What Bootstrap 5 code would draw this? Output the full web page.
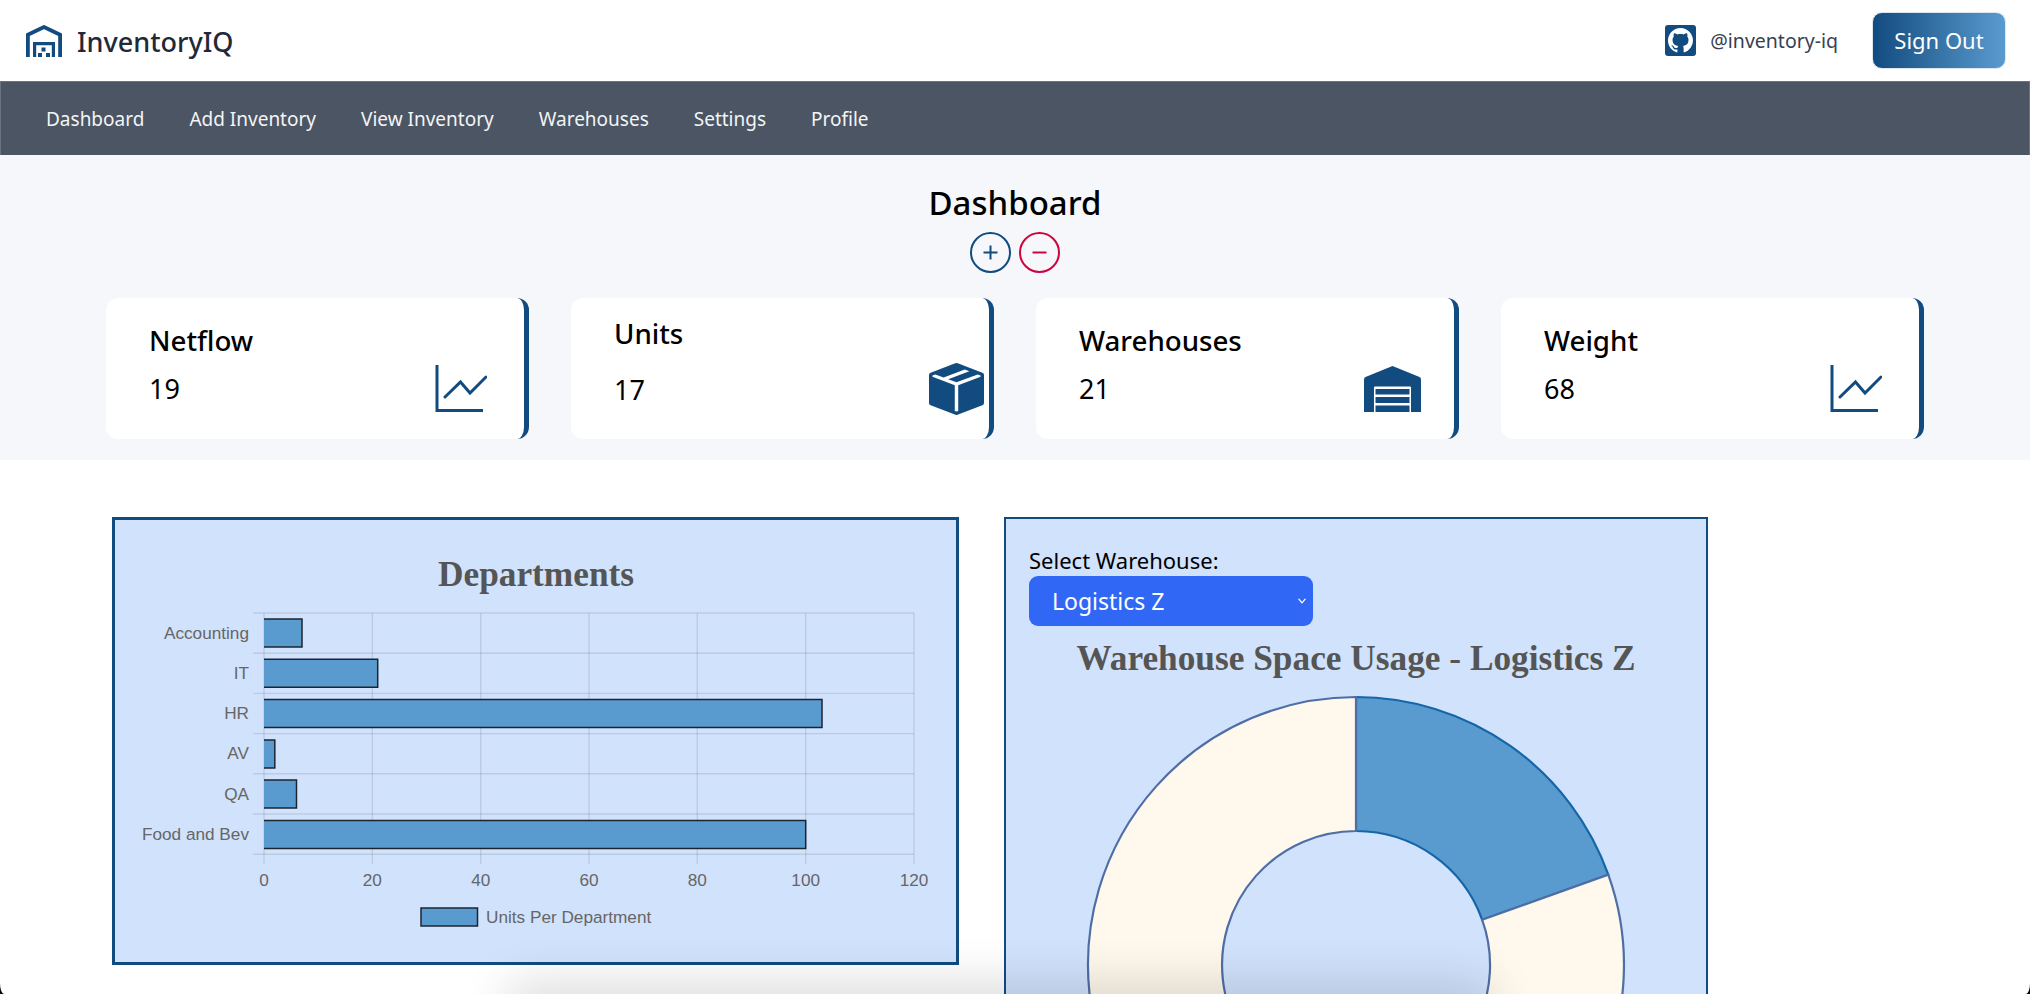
<!DOCTYPE html>
<html lang="en">
<head>
<meta charset="utf-8">
<title>InventoryIQ</title>
<link rel="stylesheet" href="https://cdn.jsdelivr.net/npm/bootstrap@5.3.0/dist/css/bootstrap.min.css">
<style>
html,body{height:994px;overflow:hidden;background:#fff}
body{font-family:"Noto Sans","Open Sans",sans-serif;color:#000}
.top-bar{height:81px;padding:0 24px 0 26px}
.brand-logo{width:36px;height:32px;display:block}
.brand-name{font-size:27px;font-weight:500;color:#1f2937;margin-left:15px;line-height:1;position:relative;top:1px}
.gh-icon{width:31px;height:31px;background:#124b7f;border-radius:3px}
.gh-name{font-size:19.500px;color:#374151;margin:0 34px 0 14px}
.signout-btn{width:134px;height:57px;border-radius:10px;border:1px solid #dbe6f1;color:#fff;font-size:22px;padding:0;background:linear-gradient(90deg,#124b7f,#5a9bcf)}
.signout-btn:hover{color:#fff}
.main-nav{height:74px;background:#4b5563;padding:2px 0 0 45px;border:1px solid #6b7280;border-width:1px 1px 0}
.main-nav.navbar-expand .navbar-nav .nav-link{color:#f3f4f6;font-size:19px;padding:0;margin-right:45px}
.summary-band{height:305px;background:#f5f7fb;padding:0 106px}
.page-title{font-size:33px;font-weight:500;line-height:1;margin:0;padding-top:31px}
.round-btns{gap:8px;margin-top:13px;height:41px}
.round-btn{width:41px;height:41px;padding:0;border:0;background:none;display:block}
.round-btn svg{display:block}
.stat-tiles{margin-top:25px}
.stat-tile{width:423px;height:141px;background:#fff;border-right:5.500px solid #124b7f;border-radius:12px;padding:0 30px 0 43px;position:relative}
.tile-name{font-size:27.700px;font-weight:500;line-height:1;margin:0;position:relative;top:29px}
.tile-value{font-size:27px;line-height:1;margin:0;position:relative;top:49px}
.tile-name.lifted{top:22px}
.tile-value.lifted{top:50px}
.tile-icon{position:absolute;display:block}
.icon-chart{left:329px;top:67px}
.icon-box{left:358px;top:65px}
.icon-shed{left:328px;top:68px}
.chart-area{padding:57px 0 0 112px;gap:45px}
.dept-panel{width:847px;height:448px;background:#d1e2fc;border:3px solid #124b7f;flex:none}
.dept-panel svg,.ware-panel svg{display:block}
.ware-panel{width:704px;height:760px;background:#d1e2fc;border:2px solid #124b7f;flex:none;padding:27px 0 0 23px}
.ware-label{font-size:22px;line-height:28px;display:block;margin:0 0 2px}
.ware-select{width:284px;height:50px;background-color:#3068f5;color:#fff;border:0;border-radius:9px;font-size:23px;padding:0 30px 0 23px;background-image:url("data:image/svg+xml,%3csvg xmlns='http://www.w3.org/2000/svg' viewBox='0 0 16 16'%3e%3cpath fill='none' stroke='%23fff' stroke-linecap='round' stroke-linejoin='round' stroke-width='2' d='m3 5 5 6 5-6'/%3e%3c/svg%3e");background-size:10px 10px;background-position:right 6px center}
.ware-chart{margin:4px 0 0 -23px}
.ct{font-family:"Liberation Sans",Arial,sans-serif;font-size:17.200px;fill:#666}
.cth{font-family:"Liberation Serif","Times New Roman",serif;font-weight:700;font-size:35.300px;fill:#555}
.dock-shade{position:fixed;left:520px;width:960px;bottom:-40px;height:40px;background:#000;box-shadow:0 0 50px 12px rgba(0,0,0,.3);opacity:.45;pointer-events:none}
.win-corners{position:fixed;left:0;right:0;top:0;bottom:0;border-bottom-left-radius:4px 11px;border-bottom-right-radius:4px 11px;box-shadow:0 0 0 20px #050518;pointer-events:none}
</style>
</head>
<body>
<header class="top-bar d-flex align-items-center justify-content-between">
  <div class="d-flex align-items-center">
    <svg class="brand-logo" viewBox="26 25 36 32" aria-label="InventoryIQ logo">
      <path fill="none" stroke="#124b7f" stroke-width="3.800" d="M27.900 57V34.800L44 27l16.100 7.800V57"/>
      <path fill="none" stroke="#124b7f" stroke-width="3.200" d="M34.600 57V43.600h18.800V57"/>
      <path fill="#124b7f" d="M41.500 47.500h4v4h-4zM38 53h4v4h-4zM46 53h4v4h-4z"/>
    </svg>
    <span class="brand-name">InventoryIQ</span>
  </div>
  <div class="d-flex align-items-center">
    <span class="gh-icon d-flex align-items-center justify-content-center">
      <svg width="25" height="25" viewBox="0 0 16 16" fill="#fff"><path d="M8 0C3.58 0 0 3.58 0 8c0 3.54 2.29 6.53 5.47 7.59.4.07.55-.17.55-.38 0-.19-.01-.82-.01-1.49-2.01.37-2.53-.49-2.69-.94-.09-.23-.48-.94-.82-1.13-.28-.15-.68-.52-.01-.53.63-.01 1.08.58 1.23.82.72 1.21 1.87.87 2.33.66.07-.52.28-.87.51-1.07-1.78-.2-3.64-.89-3.64-3.95 0-.87.31-1.59.82-2.15-.08-.2-.36-1.02.08-2.12 0 0 .67-.21 2.2.82.64-.18 1.32-.27 2-.27.68 0 1.36.09 2 .27 1.53-1.04 2.2-.82 2.2-.82.44 1.1.16 1.92.08 2.12.51.56.82 1.27.82 2.15 0 3.07-1.87 3.75-3.65 3.95.29.25.54.73.54 1.48 0 1.07-.01 1.93-.01 2.2 0 .21.15.46.55.38A8.012 8.012 0 0 0 16 8c0-4.42-3.58-8-8-8z"/></svg>
    </span>
    <span class="gh-name">@inventory-iq</span>
    <button type="button" class="btn signout-btn">Sign Out</button>
  </div>
</header>
<nav class="navbar navbar-expand main-nav">
  <div class="navbar-nav">
    <a class="nav-link" href="#">Dashboard</a>
    <a class="nav-link" href="#">Add Inventory</a>
    <a class="nav-link" href="#">View Inventory</a>
    <a class="nav-link" href="#">Warehouses</a>
    <a class="nav-link" href="#">Settings</a>
    <a class="nav-link" href="#">Profile</a>
  </div>
</nav>
<section class="summary-band">
  <h1 class="page-title text-center">Dashboard</h1>
  <div class="round-btns d-flex justify-content-center">
    <button type="button" class="round-btn" aria-label="Add"><svg width="41" height="41" viewBox="0 0 41 41" fill="none" stroke="#124b7f" stroke-width="2"><circle cx="20.500" cy="20.500" r="19.500"/><path d="M20.500 13.500v14M13.500 20.500h14"/></svg></button>
    <button type="button" class="round-btn" aria-label="Remove"><svg width="41" height="41" viewBox="0 0 41 41" fill="none" stroke="#d0043c" stroke-width="2"><circle cx="20.500" cy="20.500" r="19.500"/><path d="M13.500 20.500h14"/></svg></button>
  </div>
  <div class="stat-tiles d-flex justify-content-between">
    <div class="stat-tile">
      <p class="tile-name">Netflow</p>
      <p class="tile-value">19</p>
      <svg class="tile-icon icon-chart" width="52" height="48" viewBox="0 0 52 48" fill="none" stroke="#124b7f" stroke-width="3"><path d="M2 0v45.500h46"/><path stroke-linecap="round" d="M10 32 25.500 17l9.500 11L51 12"/></svg>
    </div>
    <div class="stat-tile">
      <p class="tile-name lifted">Units</p>
      <p class="tile-value lifted">17</p>
      <svg class="tile-icon icon-box" width="55" height="52" viewBox="0 0 16 16" preserveAspectRatio="none" fill="#124b7f"><path d="M15.528 2.973a.75.75 0 0 1 .472.696v8.662a.75.75 0 0 1-.472.696l-7.25 2.9a.75.75 0 0 1-.557 0l-7.25-2.9A.75.75 0 0 1 0 12.331V3.669a.75.75 0 0 1 .471-.696L7.443.184l.01-.003.268-.108a.75.75 0 0 1 .558 0l.269.108.01.003 6.97 2.789ZM10.404 2 4.25 4.461 1.846 3.5 1 3.839v.4l6.5 2.6v7.922l.5.2.5-.2V6.84l6.5-2.6v-.4l-.846-.339L8 5.961 5.596 5 11.750 2.540 10.404 2Z"/></svg>
    </div>
    <div class="stat-tile">
      <p class="tile-name">Warehouses</p>
      <p class="tile-value">21</p>
      <svg class="tile-icon icon-shed" width="57" height="46" viewBox="0 0 57 46"><path fill="#124b7f" d="M28.500 0 55.500 11q1.500.8 1.500 2.500V46H0V13.500Q0 11.800 1.500 11Z"/><path fill="#fff" d="M10 21.500q0-1 1-1h35q1 0 1 1V46H10z"/><path fill="#124b7f" d="M11.500 23h34v5.500h-34zM11.500 31h34v6h-34zM11.500 39.500h34V46h-34z"/></svg>
    </div>
    <div class="stat-tile">
      <p class="tile-name">Weight</p>
      <p class="tile-value">68</p>
      <svg class="tile-icon icon-chart" width="52" height="48" viewBox="0 0 52 48" fill="none" stroke="#124b7f" stroke-width="3"><path d="M2 0v45.500h46"/><path stroke-linecap="round" d="M10 32 25.500 17l9.500 11L51 12"/></svg>
    </div>
  </div>
</section>
<main class="chart-area d-flex align-items-start">
  <div class="dept-panel">
    <svg width="841" height="442" viewBox="115 519 841 442">
      <text class="cth" x="536" y="585" text-anchor="middle">Departments</text>
      <g stroke="#000" stroke-opacity=".1" stroke-width="1.400">
        <path d="M253 612H914M253 652.200H914M253 692.400H914M253 732.600H914M253 772.800H914M253 813H914"/>
        <path d="M253 853.200H914"/>
        <path d="M264 612V863M372.300 612V863M480.700 612V863M589 612V863M697.300 612V863M805.700 612V863M914 612V863"/>
      </g>
      <g fill="#5a9bcf">
        <rect x="264" y="618" width="38" height="28"/>
        <rect x="264" y="658.200" width="113.700" height="28"/>
        <rect x="264" y="698.400" width="558" height="28"/>
        <rect x="264" y="739" width="10.800" height="28"/>
        <rect x="264" y="779" width="32.500" height="28"/>
        <rect x="264" y="819.500" width="541.700" height="28"/>
      </g>
      <g fill="none" stroke="#1c2430" stroke-width="1.500">
        <path d="M264 618H302V646H264"/>
        <path d="M264 658.200H377.700V686.200H264"/>
        <path d="M264 698.400H822V726.400H264"/>
        <path d="M264 739H274.800V767H264"/>
        <path d="M264 779H296.500V807H264"/>
        <path d="M264 819.500H805.700V847.500H264"/>
      </g>
      <g text-anchor="end">
        <text class="ct" x="249" y="637.500">Accounting</text>
        <text class="ct" x="249" y="678">IT</text>
        <text class="ct" x="249" y="718">HR</text>
        <text class="ct" x="249" y="758">AV</text>
        <text class="ct" x="249" y="799">QA</text>
        <text class="ct" x="249" y="839">Food and Bev</text>
      </g>
      <g text-anchor="middle">
        <text class="ct" x="264" y="885">0</text>
        <text class="ct" x="372.300" y="885">20</text>
        <text class="ct" x="480.700" y="885">40</text>
        <text class="ct" x="589" y="885">60</text>
        <text class="ct" x="697.300" y="885">80</text>
        <text class="ct" x="805.700" y="885">100</text>
        <text class="ct" x="914" y="885">120</text>
      </g>
      <rect x="421" y="907" width="56.500" height="18" fill="#5a9bcf" stroke="#1c2430" stroke-width="1.500"/>
      <text class="ct" x="486" y="922">Units Per Department</text>
    </svg>
  </div>
  <div class="ware-panel">
    <label class="ware-label" for="wh">Select Warehouse:</label>
    <select id="wh" class="form-select ware-select"><option>Logistics Z</option></select>
    <svg class="ware-chart" width="700" height="610" viewBox="1006 630 700 610">
      <text class="cth" x="1356" y="670" text-anchor="middle">Warehouse Space Usage - Logistics Z</text>
      <path fill="#5a9bcf" stroke="#1565a9" stroke-width="2.200" d="M1356 697A268 268 0 0 1 1608.300 874.700L1482.200 919.800A134 134 0 0 0 1356 831Z"/>
      <path fill="#fff8ec" stroke="#4f6ea5" stroke-width="2.200" d="M1608.300 874.700A268 268 0 1 1 1356 697V831A134 134 0 1 0 1482.200 919.800Z"/>
    </svg>
  </div>
</main>
<div class="dock-shade"></div>
<div class="win-corners"></div>
<script src="https://cdn.jsdelivr.net/npm/bootstrap@5.3.0/dist/js/bootstrap.bundle.min.js"></script>
</body>
</html>
